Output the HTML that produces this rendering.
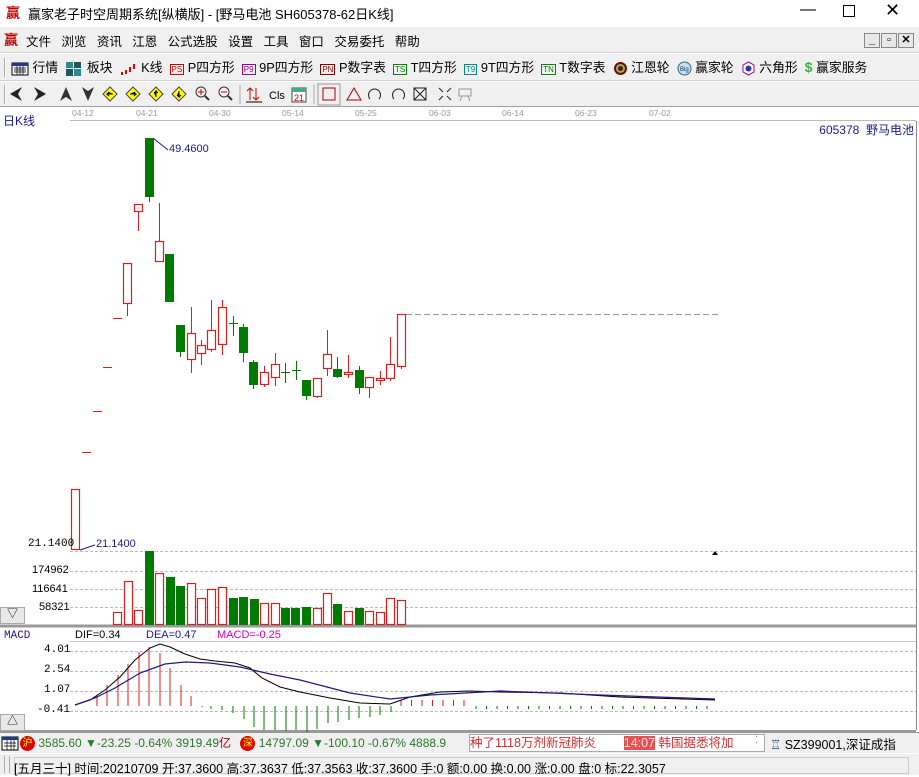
<!DOCTYPE html>
<html><head><meta charset="utf-8">
<style>
*{margin:0;padding:0;box-sizing:border-box}
body{width:919px;height:775px;overflow:hidden;background:#fff;font-family:"Liberation Sans","Noto Sans CJK SC",sans-serif;font-size:12px;color:#000;position:relative}
.abs{position:absolute;white-space:nowrap}
.bar{position:absolute;left:0;width:919px;background:#f0f0f0}
.btn{position:absolute;width:16px;height:15px;border:1px solid #888;background:#e8e8e8;font-size:11px;text-align:center;line-height:13px;font-weight:bold}
.ic{display:inline-block;vertical-align:middle}
</style></head><body>
<div class="abs" style="left:0;top:0;width:919px;height:26px;background:#fff"></div>
<div class="abs" style="left:6px;top:3px;font-size:14px;color:#c00000;font-weight:bold">赢</div>
<div class="abs" style="left:28px;top:4px;font-size:13px">赢家老子时空周期系统[纵横版] - [野马电池  SH605378-62日K线]</div>
<div class="abs" style="left:800px;top:1px;font-size:16px">—</div>
<div class="abs" style="left:843px;top:5px;width:12px;height:12px;border:1px solid #000"></div>
<div class="abs" style="left:885px;top:0px;font-size:18px;font-weight:300">✕</div>
<div class="bar" style="top:27px;height:26px;border-bottom:1px solid #d8d8d8"></div>
<div class="abs" style="left:4px;top:30px;font-size:14px;color:#c00000;font-weight:bold">赢</div>
<div class="abs" style="left:26px;top:31px;font-size:12.5px">文件&nbsp;&nbsp; 浏览&nbsp;&nbsp; 资讯&nbsp;&nbsp; 江恩&nbsp;&nbsp; 公式选股&nbsp;&nbsp; 设置&nbsp;&nbsp; 工具&nbsp;&nbsp; 窗口&nbsp;&nbsp; 交易委托&nbsp;&nbsp; 帮助</div>
<div class="btn" style="left:864px;top:33px">_</div>
<div class="btn" style="left:881px;top:33px">▫</div>
<div class="btn" style="left:898px;top:33px">✕</div>
<div class="bar" style="top:54px;height:27px;border-bottom:1px solid #d0d0d0"></div>
<div class="abs" style="left:4px;top:58px;width:2px;height:19px;border-left:1px solid #aaa;border-right:1px solid #fff"></div>
<div class="abs" style="left:11px;top:57px;font-size:12.8px">
<svg class="ic" width="18" height="14"><rect x="1" y="1" width="16" height="12" fill="#fff" stroke="#000"/><rect x="1" y="1" width="16" height="3" fill="#1e3a8a"/><path d="M3 6h12M3 8h12M3 10h12M6 4v9M9 4v9M12 4v9" stroke="#000" stroke-width=".7"/></svg> 行情&nbsp;
<svg class="ic" width="18" height="16"><rect x="1" y="1" width="7" height="6" fill="#2a8a8a"/><rect x="9" y="1" width="7" height="6" fill="#1a5a5a"/><rect x="1" y="8" width="7" height="7" fill="#1a5a5a"/><rect x="9" y="8" width="7" height="7" fill="#2a8a8a"/></svg> 板块&nbsp;
<svg class="ic" width="18" height="14"><path d="M2 10v3M6 8v4M10 5v5M14 2v5" stroke="#d00" stroke-width="2"/></svg> K线&nbsp;
<span style="color:#c00;font-size:8px;border:1px solid #c00;padding:0 1px">PS</span> P四方形&nbsp;
<span style="color:#909;font-size:8px;border:1px solid #909;padding:0 1px">P9</span> 9P四方形&nbsp;
<span style="color:#800;font-size:8px;border:1px solid #800;padding:0 1px">PN</span> P数字表&nbsp;
<span style="color:#080;font-size:8px;border:1px solid #080;padding:0 1px">TS</span> T四方形&nbsp;
<span style="color:#088;font-size:8px;border:1px solid #088;padding:0 1px">T9</span> 9T四方形&nbsp;
<span style="color:#080;font-size:8px;border:1px solid #080;padding:0 1px">TN</span> T数字表&nbsp;
<svg class="ic" width="15" height="15"><circle cx="7.5" cy="7.5" r="6.5" fill="#800"/><circle cx="7.5" cy="7.5" r="4.5" fill="#6c6"/><circle cx="7.5" cy="7.5" r="2.5" fill="#800"/></svg> 江恩轮&nbsp;
<svg class="ic" width="15" height="15"><circle cx="7.5" cy="7.5" r="6.5" fill="#cde" stroke="#367"/><text x="3" y="10" font-size="6" fill="#036">Big</text></svg> 赢家轮&nbsp;
<svg class="ic" width="15" height="15"><polygon points="7.5,1 13,4 13,11 7.5,14 2,11 2,4" fill="#fff" stroke="#a0a"/><circle cx="7.5" cy="7.5" r="3" fill="#33a"/></svg> 六角形&nbsp;
<span style="color:#4a4;font-weight:bold;font-size:14px">$</span> 赢家服务
</div>
<div class="bar" style="top:82px;height:25px;border-bottom:1px solid #a0a0a0"></div>
<div class="abs" style="left:4px;top:85px;width:2px;height:19px;border-left:1px solid #aaa;border-right:1px solid #fff"></div>
<svg class="abs" style="left:0;top:82px" width="480" height="25">
<polygon points="10,12 22,5 18,12 22,19" fill="#222"/><polygon points="46,12 34,5 38,12 34,19" fill="#222"/>
<polygon points="66,5 60,19 66,15 72,19" fill="#333"/><polygon points="88,19 82,5 88,9 94,5" fill="#333"/>
<g fill="#ff0" stroke="#444"><polygon points="110,5 117,12 110,19 103,12"/><polygon points="133,5 140,12 133,19 126,12"/><polygon points="156,5 163,12 156,19 149,12"/><polygon points="179,5 186,12 179,19 172,12"/></g>
<g stroke="#000" stroke-width="1"><path d="M113 12h-6l2-2M107 12l2 2M130 12h6l-2-2M136 12l-2 2M156 15v-6l-2 2M156 9l2 2M179 9v6l-2-2M179 15l2-2"/></g>
<g fill="none" stroke="#333"><circle cx="201" cy="10" r="5"/><path d="M205 14l4 4" stroke-width="2"/><path d="M198 10h6M201 7v6" stroke="#c00"/><circle cx="224" cy="10" r="5"/><path d="M228 14l4 4" stroke-width="2"/><path d="M221 10h6" stroke="#c00"/></g>
<line x1="240" y1="3" x2="240" y2="22" stroke="#aaa"/>
<path d="M250 6v12M247 9l3-3 3 3M256 18v-12M253 15l3 3 3-3" stroke="#c00" fill="none"/><line x1="246" y1="20" x2="262" y2="20" stroke="#000"/>
<text x="269" y="17" font-size="11" font-family="Liberation Sans">Cls</text>
<rect x="292" y="6" width="14" height="14" fill="#fff" stroke="#444"/><rect x="292" y="6" width="14" height="4" fill="#4a8"/><text x="294" y="19" font-size="9" fill="#c00">21</text>
<line x1="314" y1="3" x2="314" y2="22" stroke="#aaa"/>
<rect x="318" y="2" width="22" height="21" fill="none" stroke="#999"/>
<rect x="323" y="6" width="12" height="12" fill="none" stroke="#a00"/>
<polygon points="354,6 361,18 347,18" fill="none" stroke="#a00"/>
<path d="M370 17a6 6 0 1 1 9 0" fill="none" stroke="#222"/><path d="M394 17a6 6 0 1 1 9 0" fill="none" stroke="#222"/>
<rect x="414" y="6" width="12" height="12" fill="none" stroke="#222"/><path d="M414 6l12 12M426 6l-12 12" stroke="#222"/>
<path d="M439 6l4 4M451 6l-4 4M439 18l4-4M451 18l-4-4" stroke="#222"/>
<path d="M459 7h12v7h-12zM462 14l-2 5M468 14l2 5" fill="none" stroke="#999"/>
</svg>
<div class="abs" style="left:0;top:108px;font-size:8.5px;color:#999">
<span class="abs" style="left:72px">04-12</span><span class="abs" style="left:136px">04-21</span><span class="abs" style="left:209px">04-30</span><span class="abs" style="left:282px">05-14</span><span class="abs" style="left:355px">05-25</span><span class="abs" style="left:429px">06-03</span><span class="abs" style="left:502px">06-14</span><span class="abs" style="left:575px">06-23</span><span class="abs" style="left:649px">07-02</span></div>
<div class="abs" style="left:70px;top:120px;width:846px;height:1px;background:#bbb"></div>
<div class="abs" style="left:3px;top:112px;font-size:12px;color:#1a1a8a">日K线</div>
<div class="abs" style="right:5px;top:121px;font-size:12px;color:#1a1a8a">605378&nbsp; 野马电池</div>
<svg id="ch" class="abs" style="left:0;top:0" width="919" height="775"></svg>
<div class="abs" style="left:28px;top:538px;font-family:'Liberation Mono',monospace;font-size:11px">21.1400</div>
<div class="abs" style="left:96px;top:538px;font-size:11px;color:#1a1a8a">21.1400</div>
<div class="abs" style="left:169px;top:143px;font-size:11px;color:#1a1a8a">49.4600</div>
<div class="abs" style="left:32px;top:564px;font-size:11px">174962</div>
<div class="abs" style="left:32px;top:583px;font-size:11px">116641</div>
<div class="abs" style="left:39px;top:601px;font-size:11px">58321</div>
<div class="btn" style="left:0;top:607px;width:25px;height:17px;font-weight:normal;border-color:#aaa">▽</div>
<div class="abs" style="left:4px;top:630px;font-family:'Liberation Mono',monospace;font-size:11px;color:#1a1a8a">MACD</div>
<div class="abs" style="left:75px;top:629px;font-size:11px">DIF=0.34</div>
<div class="abs" style="left:146px;top:629px;font-size:11px;color:#1a1a8a">DEA=0.47</div>
<div class="abs" style="left:217px;top:629px;font-size:11px;color:#c0c">MACD=-0.25</div>
<div class="abs" style="left:44px;top:644px;font-family:'Liberation Mono',monospace;font-size:11px">4.01</div>
<div class="abs" style="left:44px;top:664px;font-family:'Liberation Mono',monospace;font-size:11px">2.54</div>
<div class="abs" style="left:44px;top:684px;font-family:'Liberation Mono',monospace;font-size:11px">1.07</div>
<div class="abs" style="left:37px;top:704px;font-family:'Liberation Mono',monospace;font-size:11px">-0.41</div>
<div class="btn" style="left:0;top:714px;width:25px;height:17px;font-weight:normal;border-color:#aaa">△</div>
<div class="bar" style="top:732px;height:21px;border-top:1px solid #999"></div>
<div class="abs" style="left:0;top:734px;font-size:12px">
<svg class="ic" width="20" height="15"><rect x="2" y="1" width="16" height="13" fill="#fff" stroke="#000"/><rect x="2" y="1" width="16" height="3" fill="#1e3a8a"/><path d="M4 7h12M4 10h12M7 4v10M11 4v10M14 4v10" stroke="#000" stroke-width=".7"/></svg><span style="display:inline-block;width:15px;height:15px;border-radius:50%;background:#d00;color:#ff0;font-size:10px;text-align:center;line-height:15px;vertical-align:middle">沪</span>
<span style="color:#2a7a2a"> 3585.60 ▼-23.25 -0.64% 3919.49</span><span style="color:#a00">亿</span>
<span style="display:inline-block;width:15px;height:15px;border-radius:50%;background:#d00;color:#ff0;font-size:10px;text-align:center;line-height:15px;vertical-align:middle;margin-left:6px">深</span>
<span style="color:#2a7a2a"> 14797.09 ▼-100.10 -0.67% 4888.9</span></div>
<div class="abs" style="left:469px;top:734px;width:296px;height:18px;background:#fff;border:1px solid #aaa;overflow:hidden;font-size:12.5px;color:#d03030;line-height:16px">种了1118万剂新冠肺炎&nbsp;&nbsp;&nbsp;&nbsp;&nbsp;&nbsp;&nbsp;&nbsp;<span style="background:#e85050;color:#fde">14:07</span> 韩国据悉将加</div>
<div class="abs" style="left:755px;top:735px;font-size:10px;color:#888">⁚</div>
<div class="abs" style="left:770px;top:734px;font-size:12.5px"><span style="color:#14a">♖</span> SZ399001,深证成指</div>
<div class="bar" style="top:753px;height:22px;border-top:1px solid #fff"></div>
<div class="abs" style="left:4px;top:756px;width:6px;height:17px;border-left:1px solid #aaa;border-right:1px solid #aaa"></div>
<div class="abs" style="left:14px;top:757px;width:895px;height:17px;border:1px solid #ccc"></div>
<div class="abs" style="left:14px;top:758px;font-size:12.5px">[五月三十] 时间:20210709 开:37.3600 高:37.3637 低:37.3563 收:37.3600 手:0 额:0.00 换:0.00 涨:0.00 盘:0 标:22.3057</div>
<script>
var s='';
function L(x1,y1,x2,y2,c,w,d){s+='<line x1="'+x1+'" y1="'+y1+'" x2="'+x2+'" y2="'+y2+'" stroke="'+c+'" stroke-width="'+(w||1)+'"'+(d?' stroke-dasharray="'+d+'"':'')+'/>';}
var R='#dd1c1c',G='#007a00';
L(916.5,121,916.5,730,'#888');
[551,571,589,607].forEach(function(y){L(70,y+.5,916,y+.5,'#bbb',1,'3,2');});
L(0,626,916,626,'#999',3);
L(70,641.5,916,641.5,'#ccc');
[651,671,691,711].forEach(function(y){L(70,y+.5,916,y+.5,'#bbb',1,'3,2');});
L(0,731,916,731,'#999',2);
L(406,314.5,718,314.5,'#999',1,'6,3');
s+='<polygon points="715,551 712,555 718,555" fill="#000"/>';
s+='<path d="M153 138 L168 150" stroke="#1a1a8a" fill="none"/><path d="M80 550 L95 545" stroke="#1a1a8a" fill="none"/>';
var C=[[71,489,550,489,550,R],[82,452,452,452,452,R],[93,411,411,411,411,R],[103,367,367,367,367,R],[113,318,318,318,318,R],[123,263,304,263,316,R],[134,204,212,204,231,R],[145,138,197,138,202,G],[155,241,262,203,262,R],[165,254,302,254,302,G],[176,325,352,325,357,G],[187,333,360,307,373,R],[197,345,354,340,365,R],[207,330,350,300,352,R],[218,307,345,300,355,R],[229,323,323,316,336,G],[239,327,353,324,362,G],[249,362,385,360,389,G],[260,372,385,366,387,R],[271,364,378,353,386,R],[281,372,372,363,383,G],[292,370,370,361,380,G],[302,380,396,380,400,G],[313,378,397,378,398,R],[323,354,369,330,376,R],[333,369,377,357,378,G],[344,372,375,355,378,R],[355,370,388,366,394,G],[365,377,388,377,398,R],[376,378,381,371,385,R],[386,364,379,337,381,R],[397,314,367,314,369,R]];
C.forEach(function(c){var x=c[0],cx=x+4.5;L(cx,c[3],cx,c[4],c[5]);
 if(c[2]-c[1]<1){L(x,c[1]+.5,x+9,c[1]+.5,c[5]);}
 else if(c[5]==G){s+='<rect x="'+x+'" y="'+c[1]+'" width="9" height="'+(c[2]-c[1])+'" fill="'+G+'"/>';}
 else{s+='<rect x="'+(x+.5)+'" y="'+(c[1]+.5)+'" width="8" height="'+(c[2]-c[1]-1)+'" fill="#fff" stroke="'+R+'" stroke-width="1.2"/>';}});
var V=[[72,624,R],[82,624,R],[103,624,R],[113,612,R],[124,581,R],[134,610,R],[145,551,G],[155,573,R],[166,577,G],[176,586,G],[187,583,R],[197,598,R],[207,589,R],[218,587,R],[229,598,G],[239,597,G],[250,599,G],[260,603,R],[271,603,R],[281,608,G],[291,608,G],[302,607,G],[313,608,R],[323,593,R],[333,604,G],[344,611,R],[355,608,G],[365,611,R],[376,612,R],[386,598,R],[397,600,R]];
V.forEach(function(v){if(v[2]==G)s+='<rect x="'+v[0]+'" y="'+v[1]+'" width="9" height="'+(625-v[1])+'" fill="'+G+'"/>';else s+='<rect x="'+(v[0]+.5)+'" y="'+(v[1]+.5)+'" width="8" height="'+(624-v[1])+'" fill="#fff" stroke="'+R+'" stroke-width="1.2"/>';});
var MR=[[97,695],[107,685],[118,675],[128,664],[139,652],[149,647],[160,653],[170,668],[181,685],[191,696]];
MR.forEach(function(m){L(m[0],706,m[0],m[1],R);});
var MG=[[202,707],[211,709],[222,710],[233,713],[244,719],[254,727],[264,730],[275,730],[286,731],[296,730],[307,732],[317,729],[328,723],[338,722],[349,720],[359,718],[370,717],[380,715],[391,712]];
MG.forEach(function(m){L(m[0],706,m[0],m[1],G);});
for(var x=401;x<=465;x+=10.5)L(x,706,x,700,R);
for(var x=476;x<=716;x+=10.5)L(x,706,x,709,G);
s+='<polyline fill="none" stroke="#000" points="75,705 90,700 105,690 120,677 135,660 150,648 160,644 170,647 185,654 200,659 215,661 235,663 250,668 262,678 280,687 300,692 330,698 360,703 390,704 410,697 440,692 470,691 500,692 560,693 620,697 715,700"/>';
s+='<polyline fill="none" stroke="#1a1a8a" stroke-width="1.2" points="75,705 95,698 115,688 140,673 165,664 185,662 210,663 240,667 270,674 300,680 350,693 390,699 430,695 500,691 600,695 715,699"/>';
document.getElementById('ch').innerHTML=s;
</script>
</body></html>
